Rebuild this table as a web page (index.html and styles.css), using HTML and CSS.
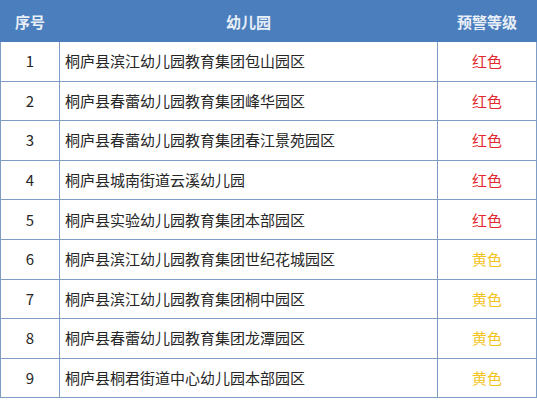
FILE: index.html
```html
<!DOCTYPE html>
<html lang="zh-CN">
<head>
<meta charset="utf-8">
<link rel="stylesheet" href="styles.css">
</head>
<body>
<table class="grid">
  <thead>
    <tr><th class="c-no">序号</th><th class="c-name">幼儿园</th><th class="c-level">预警等级</th></tr>
  </thead>
  <tbody>
    <tr><td class="c-no">1</td><td class="c-name">桐庐县滨江幼儿园教育集团包山园区</td><td class="c-level red">红色</td></tr>
    <tr><td class="c-no">2</td><td class="c-name">桐庐县春蕾幼儿园教育集团峰华园区</td><td class="c-level red">红色</td></tr>
    <tr><td class="c-no">3</td><td class="c-name">桐庐县春蕾幼儿园教育集团春江景苑园区</td><td class="c-level red">红色</td></tr>
    <tr><td class="c-no">4</td><td class="c-name">桐庐县城南街道云溪幼儿园</td><td class="c-level red">红色</td></tr>
    <tr><td class="c-no">5</td><td class="c-name">桐庐县实验幼儿园教育集团本部园区</td><td class="c-level red">红色</td></tr>
    <tr><td class="c-no">6</td><td class="c-name">桐庐县滨江幼儿园教育集团世纪花城园区</td><td class="c-level yellow">黄色</td></tr>
    <tr><td class="c-no">7</td><td class="c-name">桐庐县滨江幼儿园教育集团桐中园区</td><td class="c-level yellow">黄色</td></tr>
    <tr><td class="c-no">8</td><td class="c-name">桐庐县春蕾幼儿园教育集团龙潭园区</td><td class="c-level yellow">黄色</td></tr>
    <tr><td class="c-no">9</td><td class="c-name">桐庐县桐君街道中心幼儿园本部园区</td><td class="c-level yellow">黄色</td></tr>
  </tbody>
</table>
</body>
</html>
```
FILE: styles.css
```css
html, body {
  margin: 0;
  padding: 0;
  background: #ffffff;
}
body {
  font-family: "Noto Sans CJK SC", "Liberation Sans", sans-serif;
  font-size: 15px;
  color: #262626;
}
.grid {
  width: 537px;
  border-collapse: collapse;
  table-layout: fixed;
}
.grid th {
  background: #4a7ebd;
  color: #e9eff8;
  font-weight: bold;
  height: 40px;
  padding: 0;
  border: 1px solid #4a7ebd;
  text-align: center;
}
.grid td {
  height: 38.6px;
  padding: 0;
  border: 1px solid #7f9cc4;
  line-height: 20px;
}
.c-no { width: 58px; text-align: center; }
.c-name { width: 377px; }
td.c-name { padding-left: 5px; text-align: left; }
.c-level { text-align: center; }
.red { color: #e2282f; }
.yellow { color: #f4c21c; }
```
